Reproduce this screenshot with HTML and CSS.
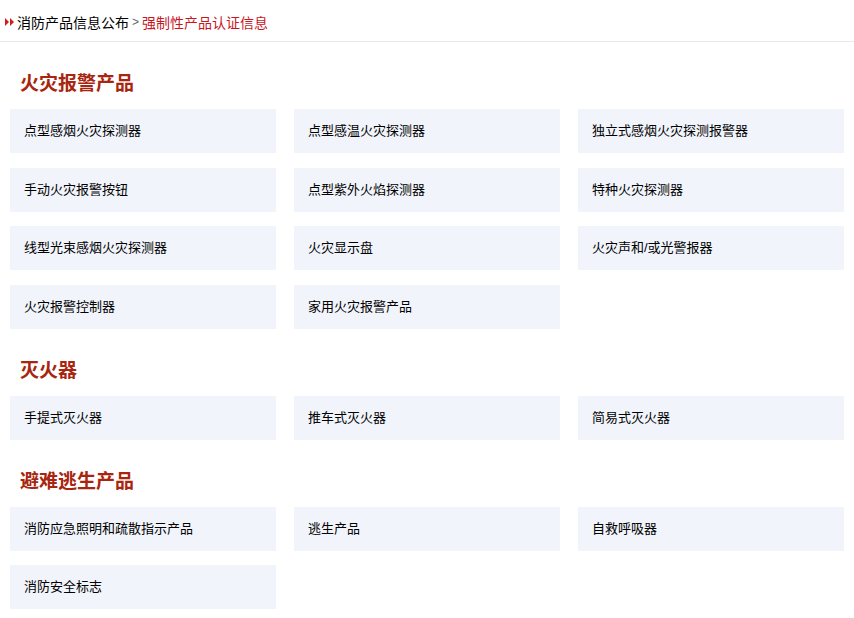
FILE: index.html
```html
<!DOCTYPE html>
<html>
<head>
<meta charset="utf-8">
<title>强制性产品认证信息</title>
<link rel="stylesheet" href="styles.css">
</head>
<body>
<div class="crumb">
  <span class="crumb-icon"><svg width="10" height="8" viewBox="0 0 10 8"><polygon points="0,0 4,4 0,8" fill="#d21a1a"/><polygon points="5,0 9,4 5,8" fill="#d21a1a"/></svg></span>
  <a class="crumb-link" href="#">消防产品信息公布</a>
  <span class="crumb-sep">&gt;</span>
  <span class="crumb-cur">强制性产品认证信息</span>
</div>

<div class="content">
  <h2 class="cat-title">火灾报警产品</h2>
  <ul class="cat-list">
    <li><a href="#">点型感烟火灾探测器</a></li>
    <li><a href="#">点型感温火灾探测器</a></li>
    <li><a href="#">独立式感烟火灾探测报警器</a></li>
    <li><a href="#">手动火灾报警按钮</a></li>
    <li><a href="#">点型紫外火焰探测器</a></li>
    <li><a href="#">特种火灾探测器</a></li>
    <li><a href="#">线型光束感烟火灾探测器</a></li>
    <li><a href="#">火灾显示盘</a></li>
    <li><a href="#">火灾声和/或光警报器</a></li>
    <li><a href="#">火灾报警控制器</a></li>
    <li><a href="#">家用火灾报警产品</a></li>
  </ul>

  <h2 class="cat-title">灭火器</h2>
  <ul class="cat-list">
    <li><a href="#">手提式灭火器</a></li>
    <li><a href="#">推车式灭火器</a></li>
    <li><a href="#">简易式灭火器</a></li>
  </ul>

  <h2 class="cat-title">避难逃生产品</h2>
  <ul class="cat-list">
    <li><a href="#">消防应急照明和疏散指示产品</a></li>
    <li><a href="#">逃生产品</a></li>
    <li><a href="#">自救呼吸器</a></li>
    <li><a href="#">消防安全标志</a></li>
  </ul>
</div>
</body>
</html>
```

FILE: styles.css
```css
body {
	margin: 0;
	background-color: #fff;
	font-family: "Liberation Sans", "Noto Sans CJK SC", sans-serif;
	font-size: 13px;
	color: #000;
}

a {
	color: #000;
	text-decoration: none;
}

.crumb {
	height: 42px;
	display: flex;
	align-items: center;
	padding-left: 5px;
	padding-top: 2px;
	border-bottom: 1px solid #e8e8e8;
	font-size: 14px;
	box-sizing: border-box;
}

.crumb-icon {
	display: flex;
	margin-right: 2px;
}

.crumb-sep {
	color: #666;
	font-size: 12px;
	margin: 0 3px;
}

.crumb-cur {
	color: #c8161e;
}

.content {
	padding: 0 10px;
}

.cat-title {
	margin: 30px 0 0 10px;
	height: 23px;
	line-height: 23px;
	font-size: 19px;
	font-weight: bold;
	color: #a8250f;
}

.cat-list {
	list-style: none;
	margin: 14px 0 0 0;
	padding: 0;
	display: grid;
	grid-template-columns: repeat(3, 1fr);
	column-gap: 18px;
	row-gap: 14.5px;
}

.cat-list li {
	height: 44px;
	line-height: 44px;
	padding-left: 14px;
	background-color: #f1f4fb;
}
```
